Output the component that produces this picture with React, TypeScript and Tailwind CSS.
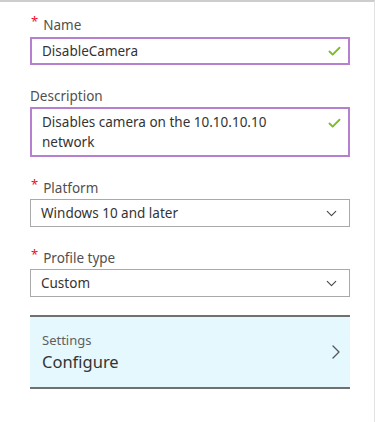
import { ChevronDown, ChevronRight, Check } from 'lucide-react';

const FONT = { fontFamily: '"Noto Sans", "Open Sans", sans-serif' };

const Label = ({ text, required }: { text: string; required?: boolean }) => (
  <div className="flex h-5 items-center text-[13.5px] leading-5 text-[#505050]">
    {required && <span className="mr-[5px] -mt-[8px] ml-px text-[13px] leading-none text-[#e8102b]">*</span>}
    <span>{text}</span>
  </div>
);

export default function App() {
  return (
    <div className="h-[422px] w-[375px] border-t-2 border-r border-t-[#cdcdcd] border-r-[#e2e2e2] bg-white" style={FONT}>
      <div className="flex w-[350px] flex-col pl-[30px] pt-[13px]">
        <Label text="Name" required />
        <div className="mt-[2px] flex h-[28px] items-center justify-between border-2 border-[#b77fd0] pl-[10px] pr-[6px] text-[13.5px] text-[#333]">
          <span>DisableCamera</span>
          <Check size={15} strokeWidth={3} className="text-[#7cbb2b]" />
        </div>

        <div className="mt-[21px]">
          <Label text="Description" />
        </div>
        <div className="mt-px flex h-[50px] items-start justify-between border-2 border-[#b77fd0] pl-[10px] pr-[6px] pt-[3px] text-[13.5px] leading-[20px] text-[#333]">
          <span className="w-[240px]">Disables camera on the 10.10.10.10 network</span>
          <Check size={15} strokeWidth={3} className="mt-[4px] text-[#7cbb2b]" />
        </div>

        <div className="mt-[21px]">
          <Label text="Platform" required />
        </div>
        <div className="mt-px flex h-[28px] items-center justify-between border border-[#a9a9a9] pl-[10px] pr-[9px] text-[13.5px] text-[#333]">
          <span>Windows 10 and later</span>
          <ChevronDown size={17} strokeWidth={1.5} className="text-[#444]" />
        </div>

        <div className="mt-[21px]">
          <Label text="Profile type" required />
        </div>
        <div className="mt-px flex h-[28px] items-center justify-between border border-[#a9a9a9] pl-[10px] pr-[9px] text-[13.5px] text-[#333]">
          <span>Custom</span>
          <ChevronDown size={17} strokeWidth={1.5} className="text-[#444]" />
        </div>

        <div className="mt-[18px] flex h-[74px] items-center justify-between border-y-2 border-[#707070] bg-[#e5f8fd] pl-[12px] pr-[2px]">
          <div className="flex flex-col">
            <span className="text-[13px] leading-[20px] text-[#5f5f5f]">Settings</span>
            <span className="text-[16.5px] leading-[24px] text-[#333]">Configure</span>
          </div>
          <ChevronRight size={24} strokeWidth={1.3} className="text-[#555]" />
        </div>
      </div>
    </div>
  );
}
